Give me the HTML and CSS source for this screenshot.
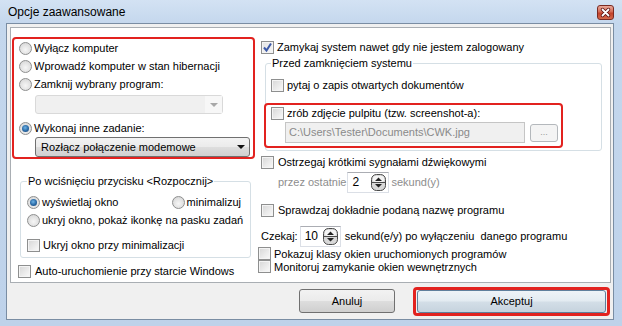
FILE: index.html
```html
<!DOCTYPE html>
<html lang="pl">
<head>
<meta charset="UTF-8">
<title>Opcje zaawansowane</title>
<link rel="stylesheet" href="styles.css">
</head>
<body>
  <div class="window">
    <div class="titlebar">
      <span class="title">Opcje zaawansowane</span>
      <span class="close">
        <svg width="17" height="15" viewBox="0 0 17 15">
          <path d="M5.5 4.5 L11.5 10.5 M11.5 4.5 L5.5 10.5" stroke="#5a1010" stroke-width="3.4" stroke-linecap="round"/>
          <path d="M5.5 4.5 L11.5 10.5 M11.5 4.5 L5.5 10.5" stroke="#ffffff" stroke-width="1.8" stroke-linecap="round"/>
        </svg>
      </span>
    </div>

    <div class="client">
      <div class="panel">
        <div class="col col-left">
          <div class="mark mark-tasks">
            <label class="opt"><span class="radio"></span>Wyłącz komputer</label>
            <label class="opt"><span class="radio"></span>Wprowadź komputer w stan hibernacji</label>
            <label class="opt"><span class="radio"></span>Zamknij wybrany program:</label>
            <div class="combo combo-off"><span class="combo-text"></span><span class="combo-drop"><span class="arrow"></span></span></div>
            <label class="opt opt-task"><span class="radio on"></span>Wykonaj inne zadanie:</label>
            <div class="combo combo-task"><span class="combo-text">Rozłącz połączenie modemowe</span><span class="combo-drop"><span class="arrow"></span></span></div>
          </div>

          <fieldset class="group group-start">
            <legend>Po wciśnięciu przycisku &lt;Rozpocznij&gt;</legend>
            <div class="opt-pair">
              <label class="opt"><span class="radio on"></span>wyświetlaj okno</label>
              <label class="opt"><span class="radio"></span>minimalizuj</label>
            </div>
            <label class="opt"><span class="radio"></span>ukryj okno, pokaż ikonkę na pasku zadań</label>
            <label class="opt opt-hide"><span class="check"></span>Ukryj okno przy minimalizacji</label>
          </fieldset>

          <label class="opt opt-auto"><span class="check"></span>Auto-uruchomienie przy starcie Windows</label>
        </div>

        <div class="col col-right">
          <label class="opt opt-system"><span class="check on">
            <svg width="11" height="11" viewBox="0 0 11 11"><path d="M2 5.5 L4.5 8.5 L9 1.5" fill="none" stroke="#3d5aa8" stroke-width="2"/></svg>
          </span>Zamykaj system nawet gdy nie jestem zalogowany</label>

          <fieldset class="group group-before">
            <legend>Przed zamknięciem systemu</legend>
            <label class="opt opt-ask"><span class="check"></span>pytaj o zapis otwartych dokumentów</label>
            <div class="mark mark-shot">
              <label class="opt opt-shot"><span class="check"></span>zrób zdjęcie pulpitu (tzw. screenshot-a):</label>
              <div class="file-row">
                <div class="textbox">C:\Users\Tester\Documents\CWK.jpg</div>
                <span class="btn-small">...</span>
              </div>
            </div>
          </fieldset>

          <label class="opt opt-beep"><span class="check"></span>Ostrzegaj krótkimi sygnałami dźwiękowymi</label>
          <div class="spin-row spin-row-off">
            <span>przez ostatnie</span>
            <span class="spin spin-two"><span class="spin-val">2</span><span class="spin-btn">
              <svg width="15" height="17" viewBox="0 0 15 17"><rect x="0.5" y="0.5" width="14" height="16" rx="5" fill="#d8d8d8" stroke="#4a4a4a"/><rect x="2" y="2" width="11" height="6" rx="2" fill="#f4f4f4"/><line x1="1" y1="8.5" x2="14" y2="8.5" stroke="#4a4a4a"/><path d="M4 7 L7.5 3.5 L11 7 Z M4 10 L7.5 13.5 L11 10 Z" fill="#222"/></svg>
            </span></span>
            <span class="spin-after">sekund(y)</span>
          </div>
          <label class="opt opt-name"><span class="check"></span>Sprawdzaj dokładnie podaną nazwę programu</label>
          <div class="spin-row spin-row-wait">
            <span>Czekaj:</span>
            <span class="spin spin-ten"><span class="spin-val">10</span><span class="spin-btn">
              <svg width="15" height="17" viewBox="0 0 15 17"><rect x="0.5" y="0.5" width="14" height="16" rx="5" fill="#d8d8d8" stroke="#4a4a4a"/><rect x="2" y="2" width="11" height="6" rx="2" fill="#f4f4f4"/><line x1="1" y1="8.5" x2="14" y2="8.5" stroke="#4a4a4a"/><path d="M4 7 L7.5 3.5 L11 7 Z M4 10 L7.5 13.5 L11 10 Z" fill="#222"/></svg>
            </span></span>
            <span class="spin-after">sekund(ę/y) po wyłączeniu&nbsp; danego programu</span>
          </div>
          <label class="opt opt-tight"><span class="check"></span>Pokazuj klasy okien uruchomionych programów</label>
          <label class="opt opt-tight"><span class="check"></span>Monitoruj zamykanie okien wewnętrznych</label>
        </div>
      </div>

      <div class="footer">
        <button class="btn btn-cancel">Anuluj</button>
        <div class="mark mark-ok"><button class="btn btn-ok">Akceptuj</button></div>
      </div>
    </div>
  </div>
</body>
</html>
```

FILE: styles.css
```css
body {
  margin: 0;
  font-family: "Liberation Sans", Arial, sans-serif;
  font-size: 11px;
  color: #000000;
}

.window {
  width: 622px;
  height: 326px;
  box-sizing: border-box;
  padding: 0 8px 6px 6px;
  display: flex;
  flex-direction: column;
  background: linear-gradient(to bottom, #d3e2f3 0px, #c4d7ed 24px, #bed2ea 100%);
}

.titlebar {
  height: 23px;
  display: flex;
  align-items: center;
  justify-content: space-between;
}

.title {
  margin-left: 2px;
  font-size: 12px;
}

.close {
  display: flex;
  width: 17px;
  height: 15px;
  margin-top: 2px;
  border: 1px solid #7a2a22;
  border-radius: 3px;
  background: linear-gradient(to bottom, #e9a99a 0%, #d46a55 45%, #c2412a 55%, #d46a4c 100%);
  box-sizing: border-box;
  align-items: center;
  justify-content: center;
}

.close svg {
  display: block;
  margin: -1px;
}

.client {
  flex: 1;
  display: flex;
  flex-direction: column;
  padding: 3px 2px 0 3px;
  border: 1px solid #7a8da3;
  background: #f0f0f0;
}

.panel {
  height: 256px;
  box-sizing: border-box;
  display: flex;
  border: 1px solid #a9aeb3;
  background: #ffffff;
}

.col-left {
  width: 245px;
  display: flex;
  flex-direction: column;
  align-items: flex-start;
}

.col-right {
  flex: 1;
  display: flex;
  flex-direction: column;
  align-items: flex-start;
}

/* red marks */
.mark {
  border: 2px solid #e2221f;
  border-radius: 4px;
}

.mark-tasks {
  width: 243px;
  box-sizing: border-box;
  margin: 9px 0 0 1px;
  padding: 0 0 0 5px;
}

/* rows with radio / checkbox */
.opt {
  height: 18px;
  display: flex;
  align-items: center;
  white-space: nowrap;
}

.radio {
  width: 13px;
  height: 13px;
  box-sizing: border-box;
  margin-right: 2px;
  border: 1px solid #8e8f8f;
  border-radius: 50%;
  background: radial-gradient(circle at 50% 60%, #f6f6f6 0%, #e2e2e2 55%, #cfcfcf 100%);
  display: flex;
  align-items: center;
  justify-content: center;
}

.radio.on::after {
  content: "";
  width: 7px;
  height: 7px;
  border-radius: 50%;
  background: radial-gradient(circle at 45% 40%, #6fb3e6 0%, #2868a4 55%, #1b3f6e 100%);
}

.check {
  width: 13px;
  height: 13px;
  box-sizing: border-box;
  margin-right: 3px;
  border: 1px solid #8e8f8f;
  background: linear-gradient(135deg, #d6d6d6 0%, #ececec 60%, #fafafa 100%);
  box-shadow: inset 0 0 0 1px #f4f4f4;
  display: flex;
  align-items: center;
  justify-content: center;
}

.check.on {
  background: linear-gradient(135deg, #e4e4e4 0%, #f6f6f6 100%);
}

/* combo boxes */
.combo {
  display: flex;
  box-sizing: border-box;
  margin-left: 16px;
  border-radius: 3px;
}

.combo-off {
  width: 188px;
  height: 19px;
  margin-top: 2px;
  border: 1px solid #d9d9d9;
  background: #f0f0f0;
}

.combo-off .combo-text {
  flex: 1;
}

.combo-off .combo-drop {
  width: 17px;
  background: #f7f7f7;
  border-left: 1px solid #f0f0f0;
}

.combo-off .arrow {
  border-top-color: #a8a8a8;
}

.combo-task {
  width: 215px;
  height: 20px;
  border: 1px solid #707070;
  background: linear-gradient(to bottom, #f3f3f3 0%, #ebebeb 48%, #dddddd 52%, #d0d0d0 100%);
  align-items: center;
}

.combo-text {
  flex: 1;
  padding-left: 5px;
  font-size: 11px;
}

.combo-drop {
  width: 17px;
  align-self: stretch;
  display: flex;
  align-items: center;
  justify-content: center;
}

.arrow {
  width: 0;
  height: 0;
  border-left: 4px solid transparent;
  border-right: 4px solid transparent;
  border-top: 4px solid #111111;
}

.opt-task {
  margin-top: 5px;
}

/* group boxes */
.group {
  box-sizing: border-box;
  margin: 0;
  border: 1px solid #d5dfe5;
  border-radius: 3px;
}

.group legend {
  padding: 0 1px;
  line-height: 14px;
}

.group-start {
  width: 231px;
  margin: 15px 0 0 9px;
  padding: 0 6px 3px 6px;
}

.opt-pair {
  margin-top: 5px;
  display: flex;
  justify-content: space-between;
  padding-right: 3px;
}

.opt-hide {
  margin-top: 7px;
}

.opt-auto {
  margin: 4px 0 0 7px;
}

.opt-auto .check {
  margin-right: 4px;
}

.opt-system {
  margin: 10px 0 0 5px;
}

.group-before {
  width: 337px;
  margin: 0 0 0 9px;
  padding: 0 5px 2px 5px;
}

.opt-ask {
  margin-top: 6px;
}

.mark-shot {
  width: 299px;
  box-sizing: border-box;
  margin: 9px 0 0 -7px;
  padding: 0 0 3px 5px;
}

.opt-shot {
  height: 16px;
}

.file-row {
  margin: 1px 0 0 14px;
  display: flex;
  align-items: center;
}

.textbox {
  width: 240px;
  height: 21px;
  box-sizing: border-box;
  padding: 0 3px;
  border: 1px solid #c5c5c5;
  background: #f0f0f0;
  color: #8a8a8a;
  font-size: 11px;
  line-height: 19px;
}

.btn-small {
  width: 28px;
  height: 18px;
  box-sizing: border-box;
  margin-left: 5px;
  border: 1px solid #b4b8bc;
  border-radius: 3px;
  background: #f4f4f4;
  color: #9a9a9a;
  font-size: 9px;
  text-align: center;
  line-height: 15px;
}

.opt-beep {
  margin: 2px 0 0 5px;
}

.opt-beep .check {
  margin-right: 4px;
}

.spin-row {
  height: 22px;
  display: flex;
  align-items: center;
  white-space: nowrap;
}

.spin-row-off {
  padding-left: 22px;
  color: #8d8d8d;
}

.spin {
  height: 21px;
  box-sizing: border-box;
  display: flex;
  align-items: center;
  border: 1px solid #dbdfe6;
  border-top-color: #abadb3;
  background: #ffffff;
  color: #000000;
  font-size: 12px;
}

.spin-val {
  flex: 1;
  padding-left: 4px;
}

.spin-btn {
  display: flex;
  margin-right: 2px;
}

.spin-two {
  width: 42px;
  margin-left: 1px;
}

.spin-ten {
  width: 41px;
  margin-left: 2px;
}

.spin-after {
  margin-left: 2px;
}

.spin-row-wait {
  margin-top: 6px;
  padding-left: 5px;
}

.spin-row-wait .spin-after {
  margin-left: 4px;
}

.opt-name {
  margin: 8px 0 0 5px;
}

.opt-name .check {
  margin-right: 4px;
}

.opt-tight {
  height: 13px;
  margin-left: 2px;
}

.opt-tight:first-of-type {
  margin-top: 3px;
}

/* footer buttons */
.footer {
  flex: 1;
  display: flex;
  align-items: center;
  justify-content: flex-end;
}

.btn {
  height: 24px;
  box-sizing: border-box;
  border: 1px solid #707070;
  border-radius: 3px;
  background: linear-gradient(to bottom, #f2f2f2 0%, #ebebeb 48%, #dddddd 52%, #cfcfcf 100%);
  font-family: "Liberation Sans", Arial, sans-serif;
  font-size: 11px;
  color: #000000;
  padding: 0;
}

.btn-cancel {
  width: 96px;
  margin-right: 18px;
}

.mark-ok {
  width: 197px;
  height: 29px;
  box-sizing: border-box;
  margin-right: 1px;
  border-width: 3px;
  padding: 0 1px;
  display: flex;
  align-items: center;
}

.btn-ok {
  flex: 1;
  height: 23px;
  border-color: #5f7f9c;
  background: linear-gradient(to bottom, #eef3f7 0%, #e3ebf1 48%, #d3dee7 52%, #c6d3de 100%);
}
```
